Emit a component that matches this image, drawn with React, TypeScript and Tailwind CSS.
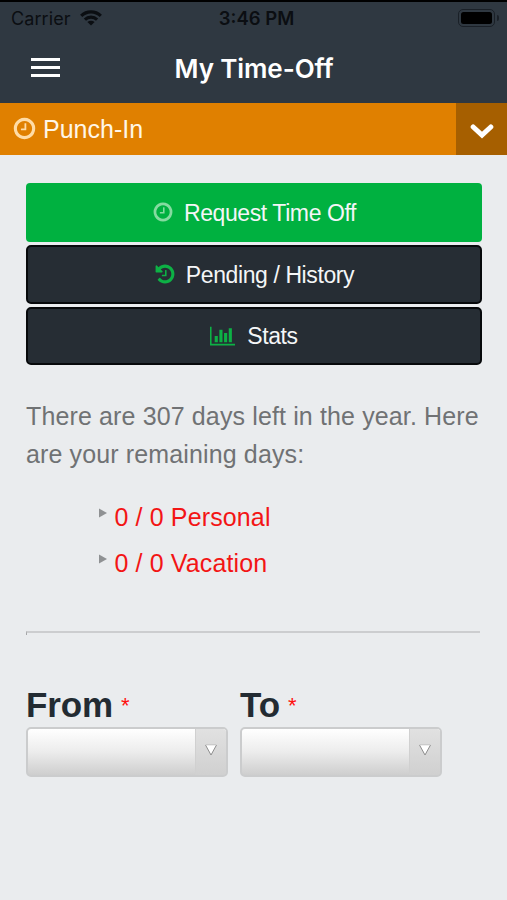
import React from 'react';

const CLOCK =
  'M1024 544v448q0 14-9 23t-23 9h-320q-14 0-23-9t-9-23v-64q0-14 9-23t23-9h224v-352q0-14 9-23t23-9h64q14 0 23 9t9 23zm416 352q0-148-73-273t-198-198-273-73-273 73-198 198-73 273 73 273 198 198 273 73 273-73 198-198 73-273zm224 0q0 209-103 385.5t-279.5 279.5-385.5 103-385.5-103-279.5-279.5-103-385.5 103-385.5 279.5-279.5 385.5-103 385.5 103 279.5 279.5 103 385.5z';
const HISTORY =
  'M1664 896q0 156-61 298t-164 245-245 164-298 61q-172 0-327-72.5t-264-204.5q-7-10-6.5-22.5t8.5-20.5l137-138q10-9 25-9 16 2 23 12 73 95 179 147t225 52q104 0 198.5-40.5t163.5-109.5 109.5-163.5 40.5-198.5-40.5-198.5-109.5-163.5-163.5-109.5-198.5-40.5q-98 0-188 35.5t-160 101.5l137 138q31 30 14 69-17 40-59 40h-448q-26 0-45-19t-19-45v-448q0-42 40-59 39-17 69 14l130 129q107-101 244.5-156.5t284.5-55.5q156 0 298 61t245 164 164 245 61 298zm-640-288v448q0 14-9 23t-23 9h-320q-14 0-23-9t-9-23v-64q0-14 9-23t23-9h224v-352q0-14 9-23t23-9h64q14 0 23 9t9 23z';
const BARS =
  'M640 896v512h-256v-512h256zm384-512v1024h-256v-1024h256zm1024 1152v128h-2048v-1536h128v1408h1920zm-640-896v768h-256v-768h256zm384-384v1152h-256v-1152h256z';

function Glyph({ d, box, className }: { d: string; box: string; className: string }) {
  return (
    <svg viewBox={box} className={className} fill="currentColor">
      <path d={d} />
    </svg>
  );
}

function StatusBar() {
  return (
    <div className="grid h-[34px] grid-cols-3 items-center border-t-2 border-black pr-[8px] pl-[11px] text-[18px] text-[#0b0e12]">
      <div className="flex items-center gap-[9px]">
        <span className="tracking-[0.1px]">Carrier</span>
        <svg viewBox="0 0 22 16" className="mt-[-1px] h-[16px] w-[22px]" fill="none" stroke="currentColor" strokeWidth="3.2">
          <path d="M1.2 5.8a14 14 0 0 1 19.6 0" />
          <path d="M4.9 9.6a8.8 8.8 0 0 1 12.2 0" />
          <path d="M11 15.6 7.4 12.1a5.2 5.2 0 0 1 7.2 0z" fill="currentColor" stroke="none" />
        </svg>
      </div>
      <span className="justify-self-center pt-[1px] pl-[3px] text-[18.5px] font-semibold">3:46 PM</span>
      <div className="flex items-center gap-[2px] justify-self-end">
        <span className="flex h-[18px] w-[37px] rounded-[5px] border border-[#1a2027] p-[2px]">
          <span className="flex-1 rounded-[2.5px] bg-black" />
        </span>
        <span className="h-[6px] w-[2px] rounded-r-full bg-[#1a2027]" />
      </div>
    </div>
  );
}

function DateField({ label }: { label: string }) {
  return (
    <div className="w-[202px]">
      <div className="flex h-[44px] items-center gap-[8px]">
        <span className="text-[35px] font-bold tracking-[-0.1px] text-[#232b32]">{label}</span>
        <span className="text-[22px] text-[#ff1010]">*</span>
      </div>
      <div className="flex h-[50px] overflow-hidden rounded-[5px] border-2 border-[#cbcccd] bg-linear-to-b from-white via-[#ececec] to-[#cecece]">
        <div className="flex-1" />
        <div className="flex w-[31px] items-center justify-center border-l border-[#d0d0d0] bg-linear-to-b from-[#e1e1e1] to-[#d0d0d0]">
          <svg viewBox="0 0 12 12" className="mt-[-4px] mr-[1px] h-[12px] w-[12px]">
            <path d="M.7 1h10.6L6 11z" fill="#fff" />
            <path d="M.5 1 6 11l5.5-10" fill="none" stroke="#8d8d8d" strokeWidth="1" />
            <path d="M.7 .8h10.6" stroke="#c4c4c4" strokeWidth="1" />
          </svg>
        </div>
      </div>
    </div>
  );
}

export default function App() {
  return (
    <div className="flex h-[900px] w-[507px] flex-col overflow-hidden bg-[#eaecee] font-['Liberation_Sans',Arial,sans-serif]">
      <header className="h-[103px] bg-[#2f3841] font-[Inter,sans-serif]">
        <StatusBar />
        <div className="grid h-[68px] grid-cols-[90px_1fr_90px] items-center">
          <div className="mt-[-2px] ml-[31px] flex w-[29px] flex-col gap-[5px]">
            <span className="h-[3px] bg-white" />
            <span className="h-[3px] bg-white" />
            <span className="h-[3px] bg-white" />
          </div>
          <h1 className="pl-[1px] text-center text-[26px] font-semibold tracking-[-0.1px] text-white">My Time-Off</h1>
        </div>
      </header>

      <div className="flex h-[52px] bg-[#e08000]">
        <div className="flex flex-1 items-center gap-[6px] pl-[12px] text-[25px] text-[#fff6e6]">
          <Glyph d={CLOCK} box="0 0 1792 1792" className="mt-[-1px] size-[25px] text-[#ffdca6]" />
          <span className="pt-[1px]">Punch-In</span>
        </div>
        <div className="flex w-[51px] items-center justify-center bg-[#a65f00]">
          <svg viewBox="0 0 24 16" className="mt-[3px] h-[16px] w-[24px]" fill="none" stroke="#fff" strokeWidth="5">
            <path d="M3.2 4 12 12l8.8-8" strokeLinecap="round" />
          </svg>
        </div>
      </div>

      <main className="flex flex-col px-[26px] pt-[28px]">
        <div className="flex w-[456px] flex-col gap-[3px] text-[23px] tracking-[-0.4px] text-[#f4f6f7]">
          <button className="flex h-[59px] items-center justify-center gap-[10px] rounded-[4px] bg-[#00b140]">
            <Glyph d={CLOCK} box="0 0 1792 1792" className="mt-[-1px] size-[22px] text-[#85dba0]" />
            <span className="pt-[1px]">Request Time Off</span>
          </button>
          <button className="flex h-[59px] items-center justify-center gap-[10px] rounded-[5px] border-2 border-[#07090b] bg-[#262d34]">
            <Glyph d={HISTORY} box="0 0 1792 1792" className="mt-[-1px] size-[22px] text-[#0db145]" />
            <span className="pt-[1px]">Pending / History</span>
          </button>
          <button className="flex h-[58px] items-center justify-center gap-[12px] rounded-[5px] border-2 border-[#07090b] bg-[#262d34]">
            <Glyph d={BARS} box="0 0 2048 1792" className="mt-[-1px] h-[22px] w-[25px] text-[#0db145]" />
            <span className="pt-[1px]">Stats</span>
          </button>
        </div>

        <p className="mt-[32px] text-[25px] leading-[38px] tracking-[0.13px] whitespace-nowrap text-[#707274]">
          There are 307 days left in the year. Here
          <br />
          are your remaining days:
        </p>

        <ul className="mt-[21px] ml-[73px] text-[25px] leading-[46px] tracking-[0.13px] text-[#f31515]">
          {['0 / 0 Personal', '0 / 0 Vacation'].map((t) => (
            <li key={t} className="flex items-center gap-[7.5px]">
              <svg viewBox="0 0 8 10" className="mt-[-8px] h-[10px] w-[8px]">
                <path d="M0 0.5 8 5 0 9.5z" fill="#8f9193" />
              </svg>
              <span>{t}</span>
            </li>
          ))}
        </ul>

        <div className="mt-[45px] h-[4px] w-[454px] border-t-2 border-l border-t-[#cccdcf] border-l-[#a5a6a8]" />

        <div className="mt-[48px] flex gap-[12px]">
          <DateField label="From" />
          <DateField label="To" />
        </div>
      </main>
    </div>
  );
}
